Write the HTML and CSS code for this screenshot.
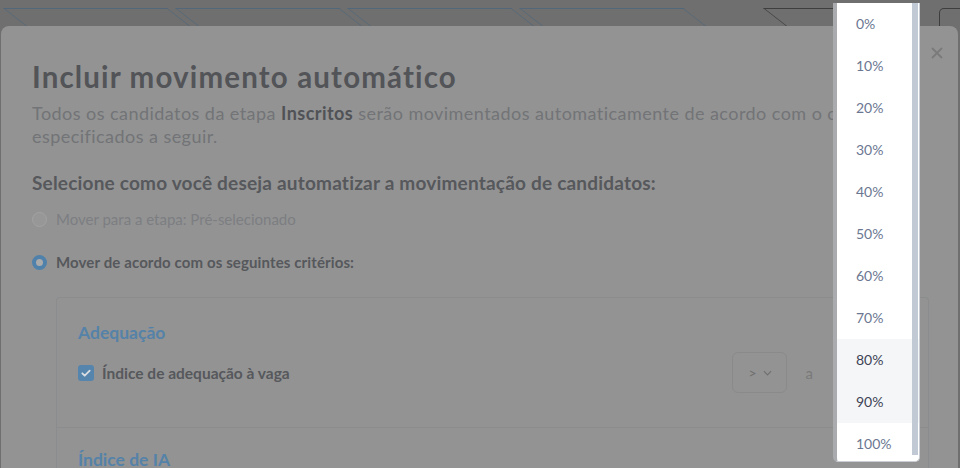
FILE: index.html
```html
<!DOCTYPE html>
<html lang="pt-BR">
<head>
<meta charset="utf-8">
<title>Incluir movimento automático</title>
<link rel="stylesheet" href="styles.css">
</head>
<body>
<div class="topbar">
  <div class="tab"></div>
  <div class="tab"></div>
  <div class="tab"></div>
  <div class="tab"></div>
  <div class="tab tab-dark"></div>
  <div class="topbox"></div>
</div>

<div class="modal">
  <svg class="close" viewBox="0 0 12 12" width="12" height="12"><path d="M1.5 1.5l9 9M10.5 1.5l-9 9" stroke="#7a7a7a" stroke-width="1.8" stroke-linecap="round"/></svg>
  <h1 class="title">Incluir movimento automático</h1>
  <p class="subtitle">Todos os candidatos da etapa <b>Inscritos</b> serão movimentados automaticamente de acordo com o critérios especificados a seguir.</p>

  <h2 class="question">Selecione como você deseja automatizar a movimentação de candidatos:</h2>

  <div class="option">
    <span class="radio"></span>
    <span class="option-label">Mover para a etapa: Pré-selecionado</span>
  </div>
  <div class="option option-on">
    <span class="radio radio-on"></span>
    <span class="option-label">Mover de acordo com os seguintes critérios:</span>
  </div>

  <div class="criteria">
    <section class="crit-section">
      <h3 class="crit-title">Adequação</h3>
      <div class="crit-row">
        <span class="check">
          <svg viewBox="0 0 16 16" width="16" height="16"><path d="M4.3 8.3l2.4 2.4 5-5" fill="none" stroke="#d9dde2" stroke-width="1.8" stroke-linecap="round" stroke-linejoin="round"/></svg>
        </span>
        <span class="crit-label">Índice de adequação à vaga</span>
        <span class="spacer"></span>
        <span class="select">&gt;
          <svg viewBox="0 0 10 6" width="9" height="6"><path d="M1 1l4 4 4-4" fill="none" stroke="#707070" stroke-width="1.3"/></svg>
        </span>
        <span class="conn">a</span>
        <span class="select select-value"></span>
      </div>
    </section>
    <section class="crit-section crit-section-2">
      <h3 class="crit-title">Índice de IA</h3>
      <div class="crit-row crit-row-2">
        <span class="spacer"></span>
        <svg class="blue-chev" viewBox="0 0 10 6" width="9" height="6"><path d="M1 1l4 4 4-4" fill="none" stroke="#5582a8" stroke-width="1.4"/></svg>
      </div>
    </section>
  </div>
</div>

<div class="dropdown">
  <ul class="dd-list">
    <li class="dd-item">0%</li>
    <li class="dd-item">10%</li>
    <li class="dd-item">20%</li>
    <li class="dd-item">30%</li>
    <li class="dd-item">40%</li>
    <li class="dd-item">50%</li>
    <li class="dd-item">60%</li>
    <li class="dd-item">70%</li>
    <li class="dd-item dd-hover">80%</li>
    <li class="dd-item dd-hover">90%</li>
    <li class="dd-item">100%</li>
  </ul>
  <span class="dd-scroll"></span>
</div>
</body>
</html>
```

FILE: styles.css
```css
* { box-sizing: border-box; }

html, body {
  margin: 0;
  padding: 0;
}

body {
  width: 960px;
  height: 468px;
  overflow: hidden;
  background: #6f6f6f;
  font-family: Lato, "Liberation Sans", sans-serif;
  position: relative;
}

/* ---------- top strip with tabs ---------- */
.topbar {
  height: 26px;
  display: flex;
  padding: 8px 0 0 3px;
  overflow: hidden;
}

.tab {
  flex: 0 0 164px;
  height: 18px;
  margin-right: 8px;
  border: 1px solid #52687a;
  border-bottom: 0;
  transform: skewX(52deg);
  transform-origin: 0 0;
}

.tab-dark {
  flex-basis: 90px;
  margin-left: 72px;
  border-color: #3e3e3e;
  border-right: 0;
}

.topbox {
  flex: 0 0 60px;
  margin-left: 78px;
  height: 18px;
  border: 1px solid #3e3e3e;
  border-bottom: 0;
  border-radius: 5px 0 0 0;
}

/* ---------- modal ---------- */
.modal {
  position: relative;
  margin-left: 1px;
  width: 957px;
  height: 442px;
  background: #939393;
  border-radius: 8px 8px 0 0;
  padding: 33px 30px 0 31px;
  overflow: hidden;
}

.close {
  position: absolute;
  top: 21px;
  left: 930px;
}

.title {
  margin: 0;
  font-size: 29.5px;
  line-height: 36px;
  font-weight: 700;
  letter-spacing: 1.15px;
  color: #525458;
}

.subtitle {
  margin: 7px 0 0;
  width: 890px;
  font-size: 18px;
  line-height: 22.5px;
  letter-spacing: 0.45px;
  color: #727477;
}

.subtitle b {
  font-weight: 700;
  color: #505256;
}

.question {
  margin: 24px 0 0;
  font-size: 19px;
  line-height: 24px;
  font-weight: 700;
  letter-spacing: 0.2px;
  color: #56585c;
}

.option {
  display: flex;
  align-items: center;
  gap: 9px;
  margin-top: 12px;
  height: 24px;
}

.option-on {
  margin-top: 19px;
}

.radio {
  width: 15px;
  height: 15px;
  border-radius: 50%;
  border: 1px solid #a2a2a2;
  background: #979797;
  flex: none;
}

.radio-on {
  border: 4px solid #5081ab;
  background: #aaaaaa;
}

.option-label {
  font-size: 15px;
  color: #7c7e82;
}

.option-on .option-label {
  font-weight: 700;
  letter-spacing: 0.12px;
  color: #56585c;
}

/* ---------- criteria box ---------- */
.criteria {
  margin: 23px 0 0 24px;
  width: 873px;
  border: 1px solid #8a8c8e;
  border-bottom: 0;
  border-radius: 4px 4px 0 0;
}

.crit-section {
  padding: 23px 9px 0 21px;
  height: 130px;
  border-bottom: 1px solid #8a8c8e;
}

.crit-section-2 {
  border-bottom: 0;
  padding-top: 20px;
}

.crit-title {
  margin: 0;
  font-size: 17.5px;
  line-height: 24px;
  font-weight: 700;
  color: #5582a8;
}

.crit-row {
  display: flex;
  align-items: center;
  margin-top: 7px;
  height: 41px;
}

.crit-row-2 {
  margin-top: -8px;
  padding-right: 14px;
}

.check {
  width: 16px;
  height: 16px;
  border-radius: 3px;
  background: #5584ad;
  display: flex;
  flex: none;
}

.crit-label {
  margin-left: 8px;
  font-size: 15.5px;
  font-weight: 700;
  color: #56585c;
}

.spacer { flex: 1; }

.select {
  width: 55px;
  height: 41px;
  border: 1px solid #8a8a8a;
  border-radius: 6px;
  display: flex;
  align-items: center;
  justify-content: center;
  gap: 6px;
  font-size: 14px;
  color: #6e6e6e;
  padding-left: 2px;
}

.conn {
  margin: 0 22px 0 19px;
  font-size: 15px;
  color: #7a7a7a;
}

.select-value {
  width: 84px;
}

/* ---------- dropdown ---------- */
.dropdown {
  position: absolute;
  left: 833px;
  top: 3px;
  width: 87px;
  height: 459px;
  background: #ffffff;
  border: 1px solid #c9cdd3;
  border-left: 4px solid #a9abae;
  border-top: 0;
  border-radius: 0 0 5px 5px;
  overflow: hidden;
}

.dd-list {
  list-style: none;
  margin: 0;
  padding: 0;
}

.dd-item {
  height: 42px;
  line-height: 42px;
  padding-left: 19px;
  font-size: 14px;
  color: #6b7791;
}

.dd-hover {
  background: #f5f6f8;
  color: #3c4355;
}

.dd-scroll {
  position: absolute;
  top: 0;
  right: 1px;
  width: 6px;
  height: 452px;
  background: #c1c9d5;
}
```
